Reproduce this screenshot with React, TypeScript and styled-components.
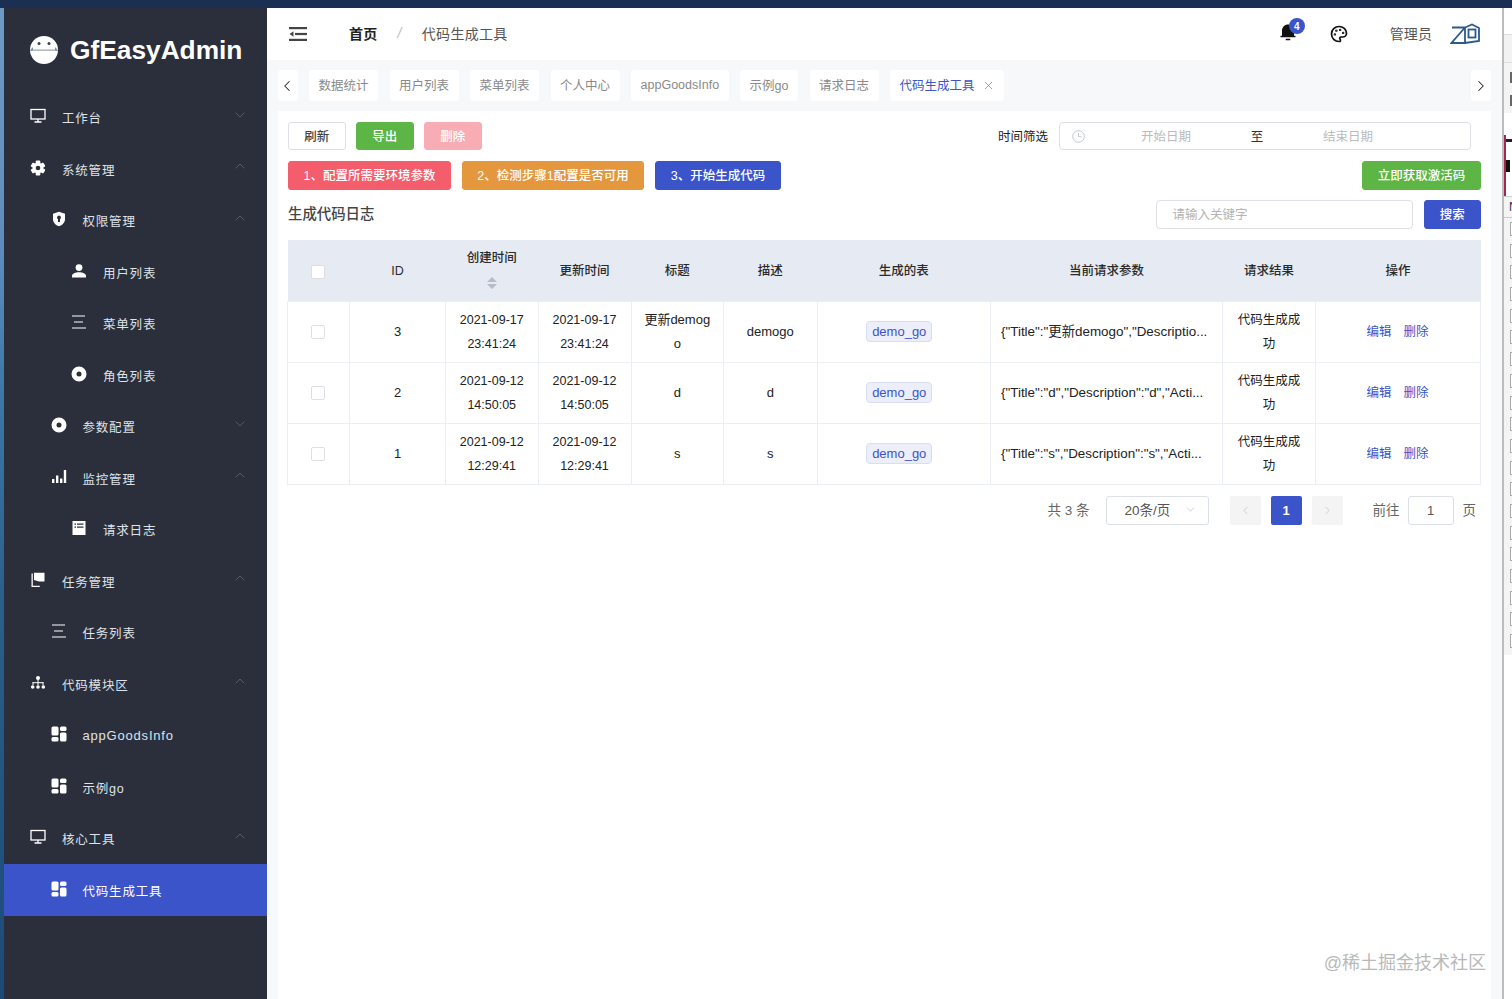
import React from "react";
import styled, { createGlobalStyle } from "styled-components";
import { RiNotification3Fill } from "react-icons/ri";
import { Palette, ChevronLeft, ChevronRight, ChevronDown, ChevronUp, X } from "lucide-react";

const SANS = `"Liberation Sans", "Noto Sans CJK SC", sans-serif`;
const BLUE = "#3b54c9";

const Global = createGlobalStyle`
  html, body { margin: 0; padding: 0; background: #fff; }
  body { font-family: ${SANS}; }
  * { box-sizing: border-box; }
`;

const Page = styled.div`
  width: 1512px; height: 999px; overflow: hidden;
  display: flex; flex-direction: column; position: relative;
`;
const TopStrip = styled.div`height: 8px; flex: none; background: #1b2f52;`;
const Body = styled.div`flex: 1; display: flex; min-height: 0;`;
const LeftPeek = styled.div`
  width: 4px; flex: none;
  background: linear-gradient(180deg, #6f9ac8 0%, #5d8cbc 25%, #3d7aa6 38%, #2a5f8c 60%, #1c4a78 100%);
`;
const Sidebar = styled.aside`
  width: 263px; flex: none; background: #2b2f3c; display: flex; flex-direction: column;
`;
const Logo = styled.div`
  height: 83.5px; flex: none; display: flex; align-items: center; padding: 0 0 0 24px; gap: 10px;
`;
const LogoText = styled.div`
  font-size: 26.3px; font-weight: 700; color: #fff; white-space: nowrap; padding-top: 1px;
`;
const MenuRow = styled.div<{ $level: number; $active?: boolean }>`
  height: 51.5px; flex: none; display: flex; align-items: center;
  padding-left: ${(p) => 26 + (p.$level - 1) * 20.5}px; padding-right: 19.5px;
  background: ${(p) => (p.$active ? "#3b54c9" : "transparent")};
  color: ${(p) => (p.$active ? "#fff" : "#dfe2e8")};
`;
const MenuLabel = styled.span<{ $latin?: boolean }>`
  font-size: ${(p) => (p.$latin ? "13px" : "12.5px")};
  letter-spacing: 0.8px; padding-top: 1px;
`;
const MenuIcon = styled.span`
  width: 16px; height: 16px; flex: none; display: flex; margin: 0 16px 2px 0; color: #fff;
`;
const MenuArrow = styled.span`
  margin-left: auto; display: flex; color: #666b79; margin-bottom: 5px;
`;

const Main = styled.main`
  flex: 1; min-width: 0; display: flex; flex-direction: column; background: #f7f8f9; position: relative;
`;
const Header = styled.header`
  height: 52px; flex: none; background: #fff; display: flex; align-items: center; padding: 0 22px;
`;
const Crumbs = styled.div`
  display: flex; align-items: center; margin-left: 42px; padding-bottom: 2px;
  font-size: 14px; color: #555; letter-spacing: 0.3px;
`;
const CrumbHome = styled.span`color: #222; font-weight: 700;`;
const CrumbSep = styled.span`color: #bbb; margin: 0 20px; font-style: italic;`;
const HeaderRight = styled.div`margin-left: auto; display: flex; align-items: center;`;
const BellWrap = styled.div`position: relative; display: flex; margin: 0 33px 4px 0;`;
const Badge = styled.span`
  position: absolute; top: -5px; left: 10px; width: 16px; height: 16px; border-radius: 50%;
  background: ${BLUE}; color: #fff; font-size: 10px; font-weight: 700;
  display: flex; align-items: center; justify-content: center;
`;
const UserName = styled.span`
  font-size: 14px; color: #555; margin: 0 18px 2px 42px; letter-spacing: 0.1px;
`;

const TabsBar = styled.div`
  height: 51px; flex: none; display: flex; align-items: center; padding: 0 11px;
`;
const ArrowBox = styled.div`
  width: 20px; height: 31px; background: #fff; border-radius: 3px; flex: none;
  display: flex; align-items: center; justify-content: center; color: #222;
`;
const LeftArrow = styled(ArrowBox)`padding-right: 2px;`;
const Tabs = styled.div`display: flex; gap: 11.5px; margin-left: 11px;`;
const Tab = styled.div<{ $active?: boolean }>`
  height: 31px; padding: 0 9.5px 2px; background: #fff; border-radius: 3px;
  display: flex; align-items: center; gap: 7px; white-space: nowrap;
  font-size: 12.5px; color: ${(p) => (p.$active ? BLUE : "#8a8a8a")};
`;
const TabClose = styled.span`display: flex; color: #777; margin-top: 2px;`;
const RightArrow = styled(ArrowBox)`margin-left: auto;`;

const Card = styled.section`
  flex: 1; margin: 0 11px; padding: 11px 10px 0; background: #fff; min-height: 0;
`;
const ToolRow = styled.div`display: flex; align-items: center; gap: 10.5px; height: 28px;`;
const StepRow = styled(ToolRow)`margin-top: 11px; height: 29px; gap: 11px;`;
const SearchRow = styled(ToolRow)`margin-top: 10px; height: 29px; gap: 11px;`;
const Btn = styled.button<{ $bg: string; $fg?: string; $w: number; $border?: string }>`
  width: ${(p) => p.$w}px; height: 100%; border: 1px solid ${(p) => p.$border || p.$bg}; border-radius: 3px;
  background: ${(p) => p.$bg}; color: ${(p) => p.$fg || "#fff"}; padding: 0 0 2px; flex: none;
  font-family: ${SANS}; font-size: 12.5px; font-weight: 500;
`;
const PushRight = styled.div`margin-left: auto; display: flex; align-items: center; height: 100%; gap: 11px;`;
const FilterLabel = styled.span`font-size: 12.5px; color: #222; padding-bottom: 2px;`;
const DateRange = styled.div`
  width: 412px; height: 28px; border: 1px solid #dcdfe6; border-radius: 4px;
  display: flex; align-items: center; padding: 0 46px 2px 12px; font-size: 12.5px; color: #bbb;
`;
const DateIcon = styled.span`width: 18px; display: flex; flex: none; margin-top: 2px;`;
const DatePart = styled.span`flex: 1; text-align: center;`;
const DateSep = styled.span`width: 30px; flex: none; text-align: center; color: #333;`;
const SectionTitle = styled.h2`margin: 0 0 4px; font-size: 14.4px; font-weight: 500; color: #444;`;
const SearchInput = styled.div`
  width: 257px; height: 100%; border: 1px solid #dcdfe6; border-radius: 4px;
  display: flex; align-items: center; padding: 0 0 2px 16px; font-size: 12.5px; color: #b5b5b5;
`;

const Grid = styled.table`
  margin: 11px 0 0 -1px; width: 1193px; table-layout: fixed; border-collapse: collapse;
  font-size: 13px; color: #222;
  border-bottom: 1px solid #ebeef5;
`;
const Th = styled.th`
  height: 61px; background: #e6eaf2; font-weight: 500; font-size: 12.5px; color: #2a2a2a;
  text-align: center; padding: 2px 0 0; line-height: 24px;
`;
const Td = styled.td<{ $left?: boolean; $small?: boolean }>`
  height: 61px; border: 1px solid #ebeef5; padding: 0 ${(p) => (p.$left ? "10px" : "12px")};
  text-align: ${(p) => (p.$left ? "left" : "center")};
  font-size: ${(p) => (p.$small ? "12.5px" : "13px")};
  line-height: 24px; word-break: break-all;
`;
const Params = styled.div`white-space: nowrap; font-size: 13.4px;`;
const Check = styled.span`
  display: inline-block; width: 14px; height: 14px; border: 1px solid #dcdfe6; border-radius: 2px;
  background: #fff; vertical-align: middle; margin-right: 2px;
`;
const SortCarets = styled.span`display: flex; justify-content: center; height: 12px; margin: 7px 0 8px;`;
const Tag = styled.span`
  display: inline-block; height: 21px; line-height: 19px; padding: 0 5px; margin-right: 9px;
  background: #eceefa; border: 1px solid #d8ddf4; border-radius: 4px; color: ${BLUE}; font-size: 13px;
`;
const Actions = styled.div`display: flex; justify-content: center; gap: 12px; margin: 0 1px 0 0;`;
const ActionLink = styled.a`color: ${BLUE}; font-size: 12.5px;`;

const Pager = styled.div`
  margin-top: 11px; height: 29px; display: flex; align-items: center; justify-content: flex-end;
  padding-right: 5px; font-size: 13.5px; color: #666;
`;
const PagerText = styled.span`padding-bottom: 2px;`;
const PagerSelect = styled.div`
  width: 103px; height: 29px; border: 1px solid #dcdfe6; border-radius: 3px; margin: 0 21px 0 16px;
  display: flex; align-items: center; justify-content: space-between; padding: 0 11px 2px 18px; color: #555;
`;
const PagerBtn = styled.div<{ $on?: boolean }>`
  width: 31px; height: 29px; border-radius: 2px; margin-right: 10px;
  display: flex; align-items: center; justify-content: center;
  background: ${(p) => (p.$on ? BLUE : "#f4f4f5")}; color: ${(p) => (p.$on ? "#fff" : "#c0c4cc")};
  font-weight: 700; font-size: 13px;
`;
const PagerJump = styled(PagerText)`margin-left: 20px;`;
const PagerInput = styled.div`
  width: 46px; height: 29px; border: 1px solid #dcdfe6; border-radius: 3px; margin: 0 9px 0 8px;
  display: flex; align-items: center; justify-content: center; font-size: 13px; color: #555;
`;
const Watermark = styled.div`
  position: absolute; right: 16px; bottom: 25px; font-size: 18px; color: #b9b9b9; white-space: nowrap;
`;

const RightPeek = styled.div`
  width: 10px; flex: none; border-left: 2px solid #bcbcbc; background: #fff;
  display: flex; flex-direction: column; overflow: hidden;
`;
const PeekTop = styled.div`height: 27px; background: #fff; border-bottom: 1px solid #ddd; flex: none;`;
const PeekBar = styled.div`height: 28px; flex: none; background: #f2f2f2; border-bottom: 1px solid #ddd;`;
const PeekTools = styled.div`
  height: 50px; flex: none; padding: 9px 0 0 6px; display: flex; flex-direction: column; gap: 12px;
  background: #f4f4f4;
`;
const PeekDash = styled.span`width: 3px; height: 11px; background: #666;`;
const PeekThumb = styled.div`height: 22px; flex: none; background: #fff;`;
const PeekPhoto = styled.div`
  height: 61px; flex: none; background: #fff; box-shadow: inset 2px 0 0 #a5274a;
  display: flex; flex-direction: column; gap: 18px; padding: 4px 0 0 2px;
`;
const PeekStroke = styled.span`width: 10px; height: 3px; background: #222;`;
const PeekMark = styled.span`width: 4px; height: 12px; background: #111;`;
const PeekHead = styled.div`
  height: 22px; flex: none; border-top: 1px solid #ccc; border-bottom: 1px solid #ccc;
  background: #f4f4f4; font-size: 12px; color: #333; padding: 4px 0 0 5px; line-height: 12px;
`;
const PeekBoxes = styled.div`
  display: flex; flex-direction: column; gap: 7.7px; padding: 4px 0 7px 6px; flex: none; background: #f4f4f4;
`;
const PeekBox = styled.span`width: 8px; height: 14px; border: 1px solid #aaa; border-right: none; background: #fff;`;
const ToolSpacer = styled.span`width: 0; margin-left: -1px;`;

/* drawings */
const RobotLogo = () => (
  <svg width="32" height="32" viewBox="0 0 32 32">
    <circle cx="16" cy="16" r="14" fill="#fff" />
    <path d="M2 17h3v-4a11 11 0 0 0-3 4zM30 17h-3v-4a11 11 0 0 1 3 4z" fill="#7f8f97" />
    <rect x="3" y="15.5" width="26" height="1.2" fill="#9aa3a8" />
    <circle cx="11" cy="9.500" r="1.500" fill="#3a3f4b" />
    <circle cx="21" cy="9.500" r="1.500" fill="#3a3f4b" />
  </svg>
);
const Desktop = () => (
  <svg width="16" height="16" viewBox="0 0 16 16" fill="none" stroke="currentColor">
    <rect x="1" y="1.500" width="14" height="9.500" strokeWidth="1.300" />
    <path d="M8 11v2.500M4.500 14h7" strokeWidth="1.300" />
  </svg>
);
const Gear = () => (
  <svg width="16" height="16" viewBox="0 0 16 16" fill="currentColor">
    <g>
      <rect x="5.700" y="0.600" width="4.600" height="14.800" rx="1" />
      <rect x="5.700" y="0.600" width="4.600" height="14.800" rx="1" transform="rotate(60 8 8)" />
      <rect x="5.700" y="0.600" width="4.600" height="14.800" rx="1" transform="rotate(120 8 8)" />
    </g>
    <circle cx="8" cy="8" r="5.400" />
    <circle cx="8" cy="8" r="2.300" fill="#2b2f3c" />
  </svg>
);
const Shield = () => (
  <svg width="16" height="16" viewBox="0 0 16 16" fill="currentColor">
    <path fillRule="evenodd" d="M8 .8l6 2v5.400c0 3.300-2.600 5.900-6 7-3.400-1.100-6-3.700-6-7V2.800zM8 4.500a2 2 0 0 0-1 3.700V11h2V8.200a2 2 0 0 0-1-3.700z" />
  </svg>
);
const Person = () => (
  <svg width="16" height="16" viewBox="0 0 16 16" fill="currentColor">
    <circle cx="8" cy="4.600" r="3.400" />
    <path d="M1 14.500v-1.700C1 10.500 4.500 9.300 8 9.300s7 1.200 7 3.500v1.700z" />
  </svg>
);
const Lines = () => (
  <svg width="16" height="16" viewBox="0 0 16 16" stroke="currentColor" strokeWidth="1.200">
    <path d="M1 2h13M3 8h9M1 14h14" />
  </svg>
);
const Radio = () => (
  <svg width="16" height="16" viewBox="0 0 16 16">
    <path fillRule="evenodd" fill="currentColor" d="M8 .5a7.500 7.500 0 1 0 0 15 7.500 7.500 0 0 0 0-15zM8 5.500a2.500 2.500 0 1 1 0 5 2.500 2.500 0 0 1 0-5z" />
  </svg>
);
const Bars = () => (
  <svg width="16" height="16" viewBox="0 0 16 16" fill="currentColor">
    <rect x="1" y="10" width="2.400" height="4" />
    <rect x="5" y="6.500" width="2.400" height="7.500" />
    <rect x="9" y="9.500" width="2.400" height="4.500" />
    <rect x="12.800" y="1" width="2.400" height="13" />
  </svg>
);
const Note = () => (
  <svg width="16" height="16" viewBox="0 0 16 16">
    <path fill="currentColor" fillRule="evenodd" d="M1.500 1h13v14h-13zM3.500 3.500v1.200h1.500V3.500zM6 3.500v1.200h6.500V3.500zM3.500 6.500v1.200h1.500V6.500zM6 6.500v1.200h6.500V6.500z" />
  </svg>
);
const Flag = () => (
  <svg width="16" height="16" viewBox="0 0 16 16" fill="currentColor">
    <path d="M4 .8h10.500v8.700H9l-5-1.500z" />
    <path d="M1.500 1.500h1.300v12.300h7v1.300H1.500z" />
  </svg>
);
const Sitemap = () => (
  <svg width="16" height="16" viewBox="0 0 16 16" fill="currentColor">
    <circle cx="8" cy="3" r="2" />
    <rect x="7.500" y="4" width="1" height="3.500" />
    <rect x="2.500" y="7.200" width="11" height="1" />
    <rect x="2.500" y="7.200" width="1" height="3" />
    <rect x="12.500" y="7.200" width="1" height="3" />
    <rect x="7.500" y="7.200" width="1" height="3" />
    <circle cx="2.700" cy="12" r="1.800" />
    <circle cx="8" cy="12" r="1.800" />
    <circle cx="13.300" cy="12" r="1.800" />
  </svg>
);
const Blocks = () => (
  <svg width="16" height="16" viewBox="0 0 16 16" fill="currentColor">
    <rect x="0.500" y="0.500" width="7" height="9" rx="1.500" />
    <rect x="0.500" y="11" width="7" height="4.500" rx="1.500" />
    <rect x="9" y="0.500" width="6.500" height="4.500" rx="1.500" />
    <rect x="9" y="6.500" width="6.500" height="9" rx="1.500" />
  </svg>
);
const Collapse = () => (
  <svg width="18" height="14" viewBox="0 0 18 14" fill="#444">
    <rect x="0" y="0" width="18" height="2.200" />
    <rect x="6" y="5.900" width="12" height="2.200" />
    <rect x="0" y="11.800" width="18" height="2.200" />
    <path d="M4.500 4.200v5.600L0.500 7z" />
  </svg>
);
const ZdLogo = () => (
  <svg width="30" height="22" viewBox="0 0 30 22" fill="none" stroke="#2c5a8c" strokeWidth="1.800">
    <path d="M2 4.500h13L1.500 20H15l14-2V5l-7-3.500-7 3v15" />
    <rect x="18.500" y="6.500" width="7" height="8" />
  </svg>
);
const Clock = () => (
  <svg width="13" height="13" viewBox="0 0 13 13" fill="none" stroke="#c4c7cd">
    <circle cx="6.500" cy="6.500" r="5.800" />
    <path d="M6.500 3v3.700h3" />
  </svg>
);
const Carets = () => (
  <svg width="10" height="12" viewBox="0 0 10 12" fill="#b7bcc8">
    <path d="M5 0l5 5H0zM0 7h10l-5 5z" />
  </svg>
);

type Item = { label: string; level: number; icon: React.ReactNode; arrow?: "up" | "down"; active?: boolean };
const MENU: Item[] = [
  { label: "工作台", level: 1, icon: <Desktop />, arrow: "down" },
  { label: "系统管理", level: 1, icon: <Gear />, arrow: "up" },
  { label: "权限管理", level: 2, icon: <Shield />, arrow: "up" },
  { label: "用户列表", level: 3, icon: <Person /> },
  { label: "菜单列表", level: 3, icon: <Lines /> },
  { label: "角色列表", level: 3, icon: <Radio /> },
  { label: "参数配置", level: 2, icon: <Radio />, arrow: "down" },
  { label: "监控管理", level: 2, icon: <Bars />, arrow: "up" },
  { label: "请求日志", level: 3, icon: <Note /> },
  { label: "任务管理", level: 1, icon: <Flag />, arrow: "up" },
  { label: "任务列表", level: 2, icon: <Lines /> },
  { label: "代码模块区", level: 1, icon: <Sitemap />, arrow: "up" },
  { label: "appGoodsInfo", level: 2, icon: <Blocks /> },
  { label: "示例go", level: 2, icon: <Blocks /> },
  { label: "核心工具", level: 1, icon: <Desktop />, arrow: "up" },
  { label: "代码生成工具", level: 2, icon: <Blocks />, active: true },
];
const TABS = ["数据统计", "用户列表", "菜单列表", "个人中心", "appGoodsInfo", "示例go", "请求日志"];
const WIDTHS = [62, 96, 92.5, 93, 92.5, 93.5, 173.5, 232, 93, 165];
const HEADS = ["ID", "创建时间", "更新时间", "标题", "描述", "生成的表", "当前请求参数", "请求结果", "操作"];
const ROWS = [
  { id: 3, c: "2021-09-17 23:41:24", title: "更新demogo", desc: "demogo", json: '{"Title":"更新demogo","Descriptio...' },
  { id: 2, c: "2021-09-12 14:50:05", title: "d", desc: "d", json: '{"Title":"d","Description":"d","Acti...' },
  { id: 1, c: "2021-09-12 12:29:41", title: "s", desc: "s", json: '{"Title":"s","Description":"s","Acti...' },
];
const DateCell = ({ v }: { v: string }) => {
  const [d, t] = v.split(" ");
  return (
    <Td $small>
      {d}
      <br />
      {t}
    </Td>
  );
};

export default function App() {
  return (
    <Page>
      <Global />
      <TopStrip />
      <Body>
        <LeftPeek />
        <Sidebar>
          <Logo>
            <RobotLogo />
            <LogoText>GfEasyAdmin</LogoText>
          </Logo>
          {MENU.map((m) => (
            <MenuRow key={m.label} $level={m.level} $active={m.active}>
              <MenuIcon>{m.icon}</MenuIcon>
              <MenuLabel $latin={m.label === "appGoodsInfo"}>{m.label}</MenuLabel>
              {m.arrow && (
                <MenuArrow>
                  {m.arrow === "up" ? <ChevronUp size={16} strokeWidth={1.1} /> : <ChevronDown size={16} strokeWidth={1.1} />}
                </MenuArrow>
              )}
            </MenuRow>
          ))}
        </Sidebar>
        <Main>
          <Header>
            <Collapse />
            <Crumbs>
              <CrumbHome>首页</CrumbHome>
              <CrumbSep>/</CrumbSep>
              <span>代码生成工具</span>
            </Crumbs>
            <HeaderRight>
              <BellWrap>
                <RiNotification3Fill size={18} color="#111" />
                <Badge>4</Badge>
              </BellWrap>
              <Palette size={18} color="#111" strokeWidth={2.3} />
              <UserName>管理员</UserName>
              <ZdLogo />
            </HeaderRight>
          </Header>
          <TabsBar>
            <LeftArrow>
              <ChevronLeft size={18} strokeWidth={1.4} />
            </LeftArrow>
            <Tabs>
              {TABS.map((t) => (
                <Tab key={t}>{t}</Tab>
              ))}
              <Tab $active>
                代码生成工具
                <TabClose>
                  <X size={13} strokeWidth={1.2} />
                </TabClose>
              </Tab>
            </Tabs>
            <RightArrow>
              <ChevronRight size={18} strokeWidth={1.4} />
            </RightArrow>
          </TabsBar>
          <Card>
            <ToolRow>
              <Btn $bg="#fff" $fg="#444" $w={57.5} $border="#dcdfe6">刷新</Btn>
              <Btn $bg="#5cb545" $w={57.5}>导出</Btn>
              <Btn $bg="#f7adb3" $w={57.5}>删除</Btn>
              <PushRight>
                <FilterLabel>时间筛选</FilterLabel>
                <DateRange>
                  <DateIcon>
                    <Clock />
                  </DateIcon>
                  <DatePart>开始日期</DatePart>
                  <DateSep>至</DateSep>
                  <DatePart>结束日期</DatePart>
                </DateRange>
                <ToolSpacer />
              </PushRight>
            </ToolRow>
            <StepRow>
              <Btn $bg="#f45d6c" $w={163}>1、配置所需要环境参数</Btn>
              <Btn $bg="#e4973c" $w={182}>2、检测步骤1配置是否可用</Btn>
              <Btn $bg={BLUE} $w={126}>3、开始生成代码</Btn>
              <PushRight>
                <Btn $bg="#5cb545" $w={119}>立即获取激活码</Btn>
              </PushRight>
            </StepRow>
            <SearchRow>
              <SectionTitle>生成代码日志</SectionTitle>
              <PushRight>
                <SearchInput>请输入关键字</SearchInput>
                <Btn $bg={BLUE} $w={57.5}>搜索</Btn>
              </PushRight>
            </SearchRow>
            <Grid>
              <colgroup>
                {WIDTHS.map((w, i) => (
                  <col key={i} width={w} />
                ))}
              </colgroup>
              <thead>
                <tr>
                  <Th>
                    <Check />
                  </Th>
                  {HEADS.map((h) => (
                    <Th key={h}>
                      {h}
                      {h === "创建时间" && (
                        <SortCarets>
                          <Carets />
                        </SortCarets>
                      )}
                    </Th>
                  ))}
                </tr>
              </thead>
              <tbody>
                {ROWS.map((r) => (
                  <tr key={r.id}>
                    <Td>
                      <Check />
                    </Td>
                    <Td>{r.id}</Td>
                    <DateCell v={r.c} />
                    <DateCell v={r.c} />
                    <Td>{r.title}</Td>
                    <Td>{r.desc}</Td>
                    <Td>
                      <Tag>demo_go</Tag>
                    </Td>
                    <Td $left>
                      <Params>{r.json}</Params>
                    </Td>
                    <Td $small>代码生成成功</Td>
                    <Td>
                      <Actions>
                        <ActionLink>编辑</ActionLink>
                        <ActionLink>删除</ActionLink>
                      </Actions>
                    </Td>
                  </tr>
                ))}
              </tbody>
            </Grid>
            <Pager>
              <PagerText>共 3 条</PagerText>
              <PagerSelect>
                20条/页
                <ChevronDown size={13} strokeWidth={1} color="#aaa" />
              </PagerSelect>
              <PagerBtn>
                <ChevronLeft size={13} strokeWidth={1.4} />
              </PagerBtn>
              <PagerBtn $on>1</PagerBtn>
              <PagerBtn>
                <ChevronRight size={13} strokeWidth={1.4} />
              </PagerBtn>
              <PagerJump>前往</PagerJump>
              <PagerInput>1</PagerInput>
              <PagerText>页</PagerText>
            </Pager>
          </Card>
          <Watermark>@稀土掘金技术社区</Watermark>
        </Main>
        <RightPeek>
          <PeekTop />
          <PeekBar />
          <PeekTools>
            <PeekDash />
            <PeekDash />
          </PeekTools>
          <PeekThumb />
          <PeekPhoto>
            <PeekStroke />
            <PeekMark />
          </PeekPhoto>
          <PeekHead>N</PeekHead>
          <PeekBoxes>
            {Array.from({ length: 20 }).map((_, i) => (
              <PeekBox key={i} />
            ))}
          </PeekBoxes>
        </RightPeek>
      </Body>
    </Page>
  );
}
